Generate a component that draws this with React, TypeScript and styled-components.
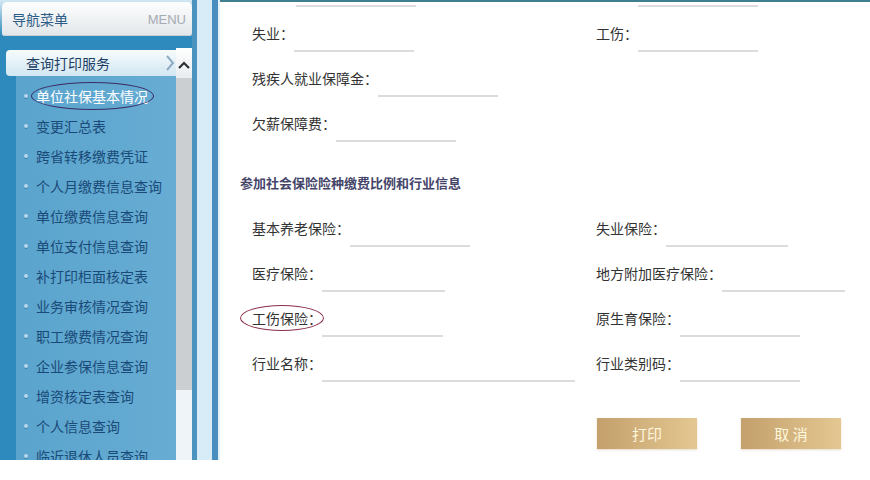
import styled, { createGlobalStyle } from "styled-components";

const GlobalStyle = createGlobalStyle`
  body {
    margin: 0;
    background: #fff;
    font-family: "Noto Sans CJK SC", "Liberation Sans", sans-serif;
  }
`;

const Frame = styled.div`
  display: flex;
  width: 870px;
  height: 460px;
`;

const Sidebar = styled.aside`
  width: 192px;
  display: flex;
  flex-direction: column;
  background: #2e8abc;
`;

const HeaderWrap = styled.div`
  padding: 2px 0 0 2px;
  background: linear-gradient(#d3e9f4, #2e8abc);
`;

const MenuHeader = styled.div`
  height: 34px;
  padding: 0 6px 0 10px;
  display: flex;
  align-items: center;
  justify-content: space-between;
  background: linear-gradient(#fdfefe, #e2e6e9);
  border-radius: 5px 5px 3px 3px;
  box-shadow: inset 0 -1px 0 #c6d0d7;
`;

const MenuTitle = styled.span`
  font-size: 14px;
  color: #2b5d86;
`;

const MenuTag = styled.span`
  font-family: "Liberation Sans", sans-serif;
  font-size: 13px;
  color: #a4abb2;
`;

const SideBody = styled.div`
  flex: 1;
  display: flex;
  padding-top: 12px;
  min-height: 0;
`;

const NavColumn = styled.div`
  flex: 1;
  display: flex;
  flex-direction: column;
  min-width: 0;
`;

const Tab = styled.div`
  margin: 2px 0 0 6px;
  height: 26px;
  padding: 0 1px 0 20px;
  display: flex;
  align-items: center;
  justify-content: space-between;
  font-size: 14px;
  color: #1d3f66;
  background: linear-gradient(#f6fbfd, #d2e7f2);
  border-radius: 4px 0 0 4px;
`;

const NavList = styled.ul`
  flex: 1;
  margin: 0 0 0 16px;
  padding: 5px 0 0 8px;
  list-style: none;
  overflow: hidden;
  background: linear-gradient(to right, #5aa4cd, #67acd3);
`;

const NavItem = styled.li<{ $active?: boolean }>`
  height: 30px;
  display: flex;
  align-items: center;
  gap: 8px;
  font-size: 14px;
  white-space: nowrap;
  color: ${(p) => (p.$active ? "#ffffff" : "#1a4a78")};

  &::before {
    content: "";
    width: 4px;
    height: 4px;
    border-radius: 50%;
    background: #b8d9ec;
    box-shadow: 0 1px 0 #3f7fa8;
  }
`;

const ItemText = styled.span<{ $circled?: boolean }>`
  position: relative;
  line-height: 20px;

  ${(p) =>
    p.$circled &&
    `
    &::after {
      content: "";
      position: absolute;
      left: -5px;
      right: -6px;
      top: -4px;
      bottom: -4px;
      border: 1.5px solid #3b2e66;
      border-radius: 50%;
    }
  `}
`;

const ScrollBar = styled.div`
  width: 16px;
  display: flex;
  flex-direction: column;
  background: #eef4f7;
`;

const ScrollUp = styled.div`
  height: 30px;
  padding-top: 13px;
  box-sizing: border-box;
  display: flex;
  justify-content: center;
  background: linear-gradient(#ffffff, #e8edf0);
`;

const ScrollThumb = styled.div`
  height: 312px;
  background: #cbcfd2;
`;

const Gutter = styled.div`
  width: 28px;
  background: linear-gradient(
    to right,
    #4d93c0 0 5px,
    #d7ecf7 5px 20px,
    #4a8ec0 20px 26px,
    #e6f1f7 26px 28px
  );
`;

const Content = styled.main`
  flex: 1;
  overflow: hidden;
  background: #fff;
  border-top: 2px solid #3f7f8e;
`;

const Form = styled.div`
  margin-top: -25px;
  padding-left: 20px;
`;

const Row = styled.div`
  display: grid;
  grid-template-columns: 344px 1fr;
  height: 45px;
  padding-left: 12px;
`;

const Field = styled.div`
  display: flex;
  align-items: flex-start;
`;

const Label = styled.span<{ $circled?: boolean }>`
  position: relative;
  line-height: 22px;
  font-size: 14px;
  color: #333;
  white-space: nowrap;

  ${(p) =>
    p.$circled &&
    `
    &::after {
      content: "";
      position: absolute;
      left: -12px;
      right: -2px;
      top: -2px;
      bottom: -2px;
      border: 1px solid #8a3048;
      border-radius: 50%;
    }
  `}
`;

const Spacer = styled.span<{ $w: number }>`
  width: ${(p) => p.$w}px;
  flex: none;
`;

const Input = styled.input<{ $w: number }>`
  width: ${(p) => p.$w}px;
  height: 30px;
  box-sizing: border-box;
  border: none;
  border-bottom: 2px solid #dcdcdc;
  background: transparent;
  outline: none;
  padding: 0;
`;

const Heading = styled.h3`
  margin: 15px 0 23px;
  line-height: 22px;
  font-size: 13px;
  font-weight: bold;
  color: #45456a;
`;

const Actions = styled.div`
  display: flex;
  gap: 44px;
  margin-top: 21px;
  padding-left: 357px;
`;

const Button = styled.button`
  width: 100px;
  height: 31px;
  border: none;
  padding: 0;
  font-family: inherit;
  font-size: 15px;
  color: #fff6dc;
  background: linear-gradient(to right, #c3a06c, #e4c792);
  box-shadow: 0 1px 2px rgba(180, 150, 100, 0.35);
`;

const navItems = [
  "单位社保基本情况",
  "变更汇总表",
  "跨省转移缴费凭证",
  "个人月缴费信息查询",
  "单位缴费信息查询",
  "单位支付信息查询",
  "补打印柜面核定表",
  "业务审核情况查询",
  "职工缴费情况查询",
  "企业参保信息查询",
  "增资核定表查询",
  "个人信息查询",
  "临近退休人员查询",
];

// label is left out for the row that is scrolled above the top edge
type FieldDef = { label?: string; indent?: number; w?: number; circled?: boolean } | null;

const topRows: [FieldDef, FieldDef][] = [
  [{ indent: 44 }, { indent: 42 }],
  [{ label: "失业：" }, { label: "工伤：" }],
  [{ label: "残疾人就业保障金：" }, null],
  [{ label: "欠薪保障费：" }, null],
];

const rateRows: [FieldDef, FieldDef][] = [
  [{ label: "基本养老保险：" }, { label: "失业保险：", w: 122 }],
  [{ label: "医疗保险：", w: 123 }, { label: "地方附加医疗保险：", w: 123 }],
  [{ label: "工伤保险：", w: 121, circled: true }, { label: "原生育保险：" }],
  [{ label: "行业名称：", w: 253 }, { label: "行业类别码：" }],
];

function FormField({ def }: { def: FieldDef }) {
  if (!def) return <div />;
  return (
    <Field>
      {def.label ? (
        <Label $circled={def.circled}>{def.label}</Label>
      ) : (
        <Spacer $w={def.indent ?? 0} />
      )}
      <Input $w={def.w ?? 120} readOnly />
    </Field>
  );
}

export default function App() {
  return (
    <>
      <GlobalStyle />
      <Frame>
        <Sidebar>
          <HeaderWrap>
            <MenuHeader>
              <MenuTitle>导航菜单</MenuTitle>
              <MenuTag>MENU</MenuTag>
            </MenuHeader>
          </HeaderWrap>
          <SideBody>
            <NavColumn>
              <Tab>
                查询打印服务
                <svg width="10" height="18" viewBox="0 0 10 18">
                  <path
                    d="M2 2 L8 9 L2 16"
                    fill="none"
                    stroke="#8eabc0"
                    strokeWidth="2"
                  />
                </svg>
              </Tab>
              <NavList>
                {navItems.map((item, i) => (
                  <NavItem key={item} $active={i === 0}>
                    <ItemText $circled={i === 0}>{item}</ItemText>
                  </NavItem>
                ))}
              </NavList>
            </NavColumn>
            <ScrollBar>
              <ScrollUp>
                <svg width="12" height="8" viewBox="0 0 12 8">
                  <path
                    d="M1 7 L6 2 L11 7"
                    fill="none"
                    stroke="#2a3038"
                    strokeWidth="2.2"
                  />
                </svg>
              </ScrollUp>
              <ScrollThumb />
            </ScrollBar>
          </SideBody>
        </Sidebar>
        <Gutter />
        <Content>
          <Form>
            {topRows.map(([a, b], i) => (
              <Row key={i}>
                <FormField def={a} />
                <FormField def={b} />
              </Row>
            ))}
            <Heading>参加社会保险险种缴费比例和行业信息</Heading>
            {rateRows.map(([a, b], i) => (
              <Row key={i}>
                <FormField def={a} />
                <FormField def={b} />
              </Row>
            ))}
            <Actions>
              <Button>打印</Button>
              <Button>取 消</Button>
            </Actions>
          </Form>
        </Content>
      </Frame>
    </>
  );
}
